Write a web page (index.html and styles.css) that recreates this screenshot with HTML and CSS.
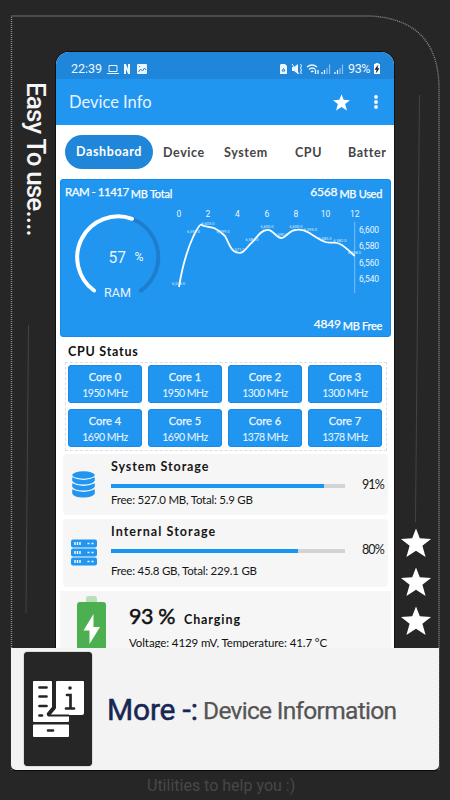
FILE: index.html
```html
<!DOCTYPE html>
<html lang="en">
<head>
<meta charset="utf-8">
<title>Device Info</title>
<link rel="stylesheet" href="styles.css">
</head>
<body>
<svg class="defs" width="0" height="0">
  <symbol id="star" viewBox="0 0 30 30"><path d="M15 .5 18.8 10.3 30 10.9 21.4 17.8 24.6 29 15 22.8 5.4 29 8.6 17.8 0 10.9 11.2 10.3Z"/></symbol>
</svg>
<main class="poster">
  <svg class="outline" viewBox="0 0 450 800">
    <path class="dots" d="M11.5 770V16H371Q439 20 439 89V770"/>
    <path class="hair" d="M28.500 325 26 613M419.500 95 415.500 522"/>
  </svg>
  <section class="stage">
    <aside class="side left"><span class="slogan">Easy To use....</span></aside>
    <div class="phone">
      <header class="status">
        <span class="time">22:39</span>
        <svg class="notes" width="44" height="12" viewBox="0 0 44 12">
          <path d="M3 2.500h8v6H3zM1 10.500h12" fill="none" stroke="#e8f4ff"/>
          <path d="M18 1h2l2 5V1h2v10h-2l-2-5v5h-2zM32 1h8a1 1 0 0 1 1 1v8a1 1 0 0 1-1 1h-8a1 1 0 0 1-1-1V2a1 1 0 0 1 1-1z" fill="#edf6ff"/>
          <path d="m32.500 9 2-3 2 2 2-3 1.500 2M33 3.500h1" fill="none" stroke="#2086da"/>
        </svg>
        <svg class="signals" width="65" height="12" viewBox="0 0 65 12">
          <path d="M2 1h4l2 2v8H1V2z" fill="#edf6ff"/><path d="M3 8h3L4.500 5.500z" fill="none" stroke="#2086da"/>
          <path d="M13 4h2l4-3v10l-4-3h-2z" fill="#edf6ff"/><path d="m13 1 7 10M21.500 1l1 2-1 2 1 2-1 2 1 2" fill="none" stroke="#edf6ff"/>
          <path d="M28 4q5-4 10 0M30 6.500q3-3 6.500 0M32 9q1.500-1.500 2.500 0M36.500 7v4M39 11V7" fill="none" stroke="#edf6ff" stroke-width="1.300"/>
          <path d="M43 11V9M45.500 11V7M56 11V9M58.500 11V7" stroke="#fff" stroke-width="1.200"/>
          <path d="M48 11V5M50.500 11V1.500M61 11V5M63.500 11V1.500" stroke="#8fc3ee" stroke-width="1.200"/>
        </svg>
        <span class="level">93%</span>
        <svg class="cell" width="8" height="12" viewBox="0 0 8 12"><path d="M2.500 0h3v1H7v10H1V1h1.500z" fill="#fff"/><path d="M4.800 2.500 2 6.500h2L3.300 9.500 6 5.500H4.200z" fill="#123" stroke="#123" stroke-width=".6"/></svg>
      </header>
      <div class="appbar">
        <h1>Device Info</h1>
        <svg class="fav" width="17" height="17"><use href="#star"/></svg>
        <svg class="more" width="4" height="14" viewBox="0 0 4 14"><circle cx="2" cy="2" r="1.900"/><circle cx="2" cy="7" r="1.900"/><circle cx="2" cy="12" r="1.900"/></svg>
      </div>
      <nav class="tabs">
        <span class="tab active">Dashboard</span><span class="tab device">Device</span><span class="tab system">System</span><span class="tab cpu">CPU</span><span class="tab battery">Battery</span>
      </nav>
      <section class="ram">
        <div class="line"><span class="total"><b>RAM - 11417</b><i>MB Total</i></span><span class="used"><b>6568</b><i>MB Used</i></span></div>
        <svg class="chart" width="331" height="110" viewBox="60 205 331 110">
          <path class="track" d="M132.500 219A41 41 0 0 1 141 290.500"/>
          <path class="gauge" d="M94 290.500A41 41 0 0 1 132 218.800"/>
          <g class="reading"><text x="108.500" y="263" font-size="16" textLength="17.500" lengthAdjust="spacingAndGlyphs">57</text><text x="134.500" y="261" font-size="12" textLength="9" lengthAdjust="spacingAndGlyphs">%</text><text x="104" y="296.500" font-size="13" textLength="27" lengthAdjust="spacingAndGlyphs">RAM</text></g>
          <g class="ticks"><text x="179" y="216.500">0</text><text x="208" y="216.500">2</text><text x="237.500" y="216.500">4</text><text x="267" y="216.500">6</text><text x="296" y="216.500">8</text><text x="325.500" y="216.500">10</text><text x="354.700" y="216.500">12</text></g>
          <path d="M354.700 222V293" stroke="#79c1fa"/>
          <path class="curve" d="M179 287C182 268 188 248 193.500 236 197 229 199 225 201 224.500 203 227 211 226.500 215 228.500 220 231 222 233 225 236 229 243 231 252 237.500 252.500 244 255 248 245 252.500 242 257 237 261 230 267 230 273 229 276 238 281.500 238 286 238 289 230 296 230 303 228 307 232 311 234 316 237 320 240 325.500 242 331 244 335 241 340 244 346 247 350 252 354.700 256"/>
          <g class="labels"><text x="178.500" y="284.500">6,528.0</text><text x="193.500" y="233">6,592.0</text><text x="208" y="225">6,603.0</text><text x="223" y="233">6,599.0</text><text x="238" y="251">6,571.0</text><text x="252" y="240.500">6,584.0</text><text x="267" y="227.500">6,600.0</text><text x="281" y="235.500">6,590.0</text><text x="296" y="227.500">6,600.0</text><text x="310.500" y="231">6,595.0</text><text x="325" y="240">6,585.0</text><text x="340" y="242">6,582.0</text><text x="354.500" y="253.500">6,568.0</text></g>
          <g class="scale"><text x="359" y="233" textLength="20">6,600</text><text x="359" y="249.300" textLength="20">6,580</text><text x="359" y="265.500" textLength="20">6,560</text><text x="359" y="281.600" textLength="20">6,540</text></g>
        </svg>
        <div class="line end"><span class="free"><b>4849</b><i>MB Free</i></span></div>
      </section>
      <h2 class="cpu-title">CPU Status</h2>
      <section class="cores">
        <div><b>Core 0</b><span>1950 MHz</span></div><div><b>Core 1</b><span>1950 MHz</span></div><div><b>Core 2</b><span>1300 MHz</span></div><div><b>Core 3</b><span>1300 MHz</span></div>
        <div><b>Core 4</b><span>1690 MHz</span></div><div><b>Core 5</b><span>1690 MHz</span></div><div><b>Core 6</b><span>1378 MHz</span></div><div><b>Core 7</b><span>1378 MHz</span></div>
      </section>
      <section class="storage">
        <svg width="26" height="27" viewBox="0 0 26 27"><g fill="#2196f0"><ellipse cx="12.500" cy="4" rx="11.300" ry="3.700"/><path d="M1.200 6.200q11.300 5.500 22.600 0v3.500q-2 3.500-11.300 3.700T1.200 9.700zM1.200 12.200q11.300 5.500 22.600 0v3.500q-2 3.500-11.300 3.700T1.200 15.700zM1.200 18.200q11.300 5.500 22.600 0v4.300q-2 3.800-11.300 4T1.200 22.500z"/></g></svg>
        <div class="detail"><h3 class="sys">System Storage</h3><div class="bar"><i style="width:91%"></i></div><p class="p1">Free: 527.0 MB, Total: 5.9 GB</p></div>
        <span class="pct">91%</span>
      </section>
      <section class="storage internal">
        <svg width="26" height="27" viewBox="0 0 26 27"><g fill="#2196f0"><rect y="0.500" width="26" height="8" rx="2"/><rect y="9.500" width="26" height="8" rx="2"/><rect y="18.500" width="26" height="8" rx="2"/></g><path d="M4 3v3M6.500 3v3M9 3v3M4 12v3M6.500 12v3M9 12v3M4 21v3M6.500 21v3M9 21v3M16.500 4.500h2M20.500 4.500h2M16.500 13.500h2M20.500 13.500h2M16.500 22.500h2M20.500 22.500h2" stroke="#fff" stroke-width="1.400"/></svg>
        <div class="detail"><h3 class="int">Internal Storage</h3><div class="bar"><i style="width:80%"></i></div><p class="p2">Free: 45.8 GB, Total: 229.1 GB</p></div>
        <span class="pct">80%</span>
      </section>
      <section class="power">
        <svg width="29" height="54" viewBox="0 0 29 54"><path d="M9 6V3q0-3 3-3h5q3 0 3 3v3z" fill="#b9dfbb"/><path d="M3 6h23q3 0 3 3v45H0V9q0-3 3-3z" fill="#4caf50"/><path d="M16.500 18 6.500 34.500h6V48L23 31h-6.500z" fill="#fff"/></svg>
        <div class="charge"><p class="head"><b>93 %</b><strong>Charging</strong></p><p class="volts">Voltage: 4129 mV, Temperature: 41.7 °C</p></div>
      </section>
    </div>
    <aside class="side right"><svg><use href="#star"/></svg><svg><use href="#star"/></svg><svg><use href="#star"/></svg></aside>
  </section>
  <section class="banner">
    <div class="tile">
      <svg width="52" height="56" viewBox="0 0 52 56"><g fill="#fff"><path d="M2 0h17q1 0 1 1v25l-5 6q-1 3 2 3h20v5q0 1-1 1H2q-1 0-1-1V1q0-1 1-1z"/><path d="M25 0h26q1 0 1 1v31q0 2-2 2H18l6-7V1q0-1 1-1z"/><rect x="1" y="43.500" width="36" height="12.500" rx="1"/></g><path d="M7.500 6.500h7M7.500 15.500h7M7.500 25h7M7.500 34.500h2.500M16 49.500h5M35 14h3.500v13.500M34 27.500h8" fill="none" stroke="#252525" stroke-width="2.700" stroke-linecap="round"/><path d="M23 27 16.500 34.500H37" fill="none" stroke="#252525" stroke-width="2" stroke-linejoin="round"/><circle cx="38" cy="7" r="1.800" fill="#252525"/></svg>
    </div>
    <p class="tagline"><b>More -:</b><span>Device Information</span></p>
  </section>
  <footer><span>Utilities to help you :)</span></footer>
</main>
</body>
</html>
```
FILE: styles.css
```css
* { box-sizing: border-box; }
body, h1, h2, h3, p { margin: 0; }
body { width: 450px; height: 800px; overflow: hidden; background: #262626; font-family: "Lato", sans-serif; }
i { font-style: normal; }
svg { display: block; flex: none; }
.defs { position: absolute; }
.poster { position: relative; height: 800px; padding-top: 52px; }
.outline { position: absolute; top: 0; left: 0; width: 450px; height: 800px; }
.dots { fill: none; stroke: #8b8b8b; stroke-width: 1.4; stroke-dasharray: 1 1; }
.hair { fill: none; stroke: #444; }
.stage { display: grid; grid-template-columns: 56px 338px 56px; height: 596px; }
.slogan { display: block; writing-mode: vertical-rl; margin: 30px 0 0 21px; color: #f5f5f5; font: 500 26px/30px Roboto, sans-serif; white-space: nowrap; letter-spacing: -.85px; }
.phone { position: relative; overflow: hidden; border-radius: 13px 13px 0 0; background: #fff; box-shadow: 0 0 0 1px #111; }
.status { display: flex; align-items: center; height: 27px; padding: 6px 13px 0 15px; background: #2086da; color: #edf6ff; font: 12.5px/16px Roboto, sans-serif; }
.time { width: 35px; }
.signals { margin-left: auto; }
.level { width: 24px; margin-left: 4px; letter-spacing: -.4px; }
.cell { margin-left: 1px; }
.appbar { display: flex; align-items: center; height: 46px; padding: 0 16px 0 13px; background: #2196f0; color: #fff; }
.appbar svg { fill: #fff; }
.fav { margin-left: auto; }
.fav use { width: 17px; height: 17px; }
.more { margin-left: 24px; }
h1 { font-size: 16.5px; font-weight: 400; line-height: 22px; white-space: nowrap; color: #e7f3ff; }
.tabs { display: flex; align-items: center; height: 54px; padding-left: 9px; width: 330px; overflow: hidden; color: #454545; font-size: 12.5px; font-weight: 700; letter-spacing: .6px; white-space: nowrap; }
.tab { flex: none; }
.active { width: 88px; height: 34px; border-radius: 17px; background: #2086da; color: #fff; line-height: 34px; text-align: center; }
.device { width: 61px; margin-left: 10px; }
.system { width: 71px; }
.cpu { width: 53px; }
.ram { width: 331px; height: 158px; margin-left: 4px; border-radius: 4px; background: #2196f0; box-shadow: inset 0 0 0 1px #198ae8; color: #fff; }
.line { display: flex; justify-content: space-between; height: 26px; padding: 4px 9px 0 5px; font-size: 11px; line-height: 17px; white-space: nowrap; -webkit-text-stroke: .25px #fff; }
.line b { font-size: 11.5px; font-weight: 400; letter-spacing: -.2px; }
.total b { letter-spacing: -.5px; }
.line i { position: relative; top: 2px; margin-left: 2px; letter-spacing: -.2px; }
.used b, .free b { font-size: 12px; }
.used i, .free i { letter-spacing: -.3px; }
.end { justify-content: flex-end; padding-top: 0; }
.reading { fill: #e8f4ff; font-family: Roboto, sans-serif; }
.gauge, .track { fill: none; stroke: #fff; stroke-width: 4; stroke-linecap: round; }
.track { stroke: #1e7ecd; }
.curve { fill: none; stroke: #fff; stroke-width: 1.8; }
.ticks { fill: #eaf5ff; font: 8.5px Roboto, sans-serif; text-anchor: middle; }
.labels { fill: #d8edff; font: 4px Roboto, sans-serif; text-anchor: middle; }
.scale { fill: #eaf5ff; font: 8.5px Roboto, sans-serif; }
.cpu-title { height: 25px; padding: 6px 0 0 12px; color: #111; font-size: 12.5px; line-height: 18px; letter-spacing: .75px; }
.cores { display: grid; grid-template-columns: repeat(4, 74px); grid-auto-rows: 38px; gap: 6px; width: 322px; height: 89px; margin-left: 9px; padding: 2px; border: 1px dashed #dcdcef; }
.cores div { display: flex; flex-direction: column; border-radius: 4px; background: #2196f0; box-shadow: inset 0 0 0 1px #198ae8; color: #eef7ff; text-align: center; font-size: 10.5px; letter-spacing: -.5px; line-height: 16px; padding-top: 4px; }
.cores b { font-size: 11px; font-weight: 400; letter-spacing: 0; -webkit-text-stroke: .25px #eef7ff; }
.storage { display: flex; width: 325px; height: 61px; margin: 3px 0 0 7px; padding: 4px 4px 0 8px; border-radius: 4px; background: #f6f6f6; color: #171717; }
.storage > svg { margin-top: 13px; }
.detail { width: 234px; margin-left: 14px; }
h3 { font-size: 12.5px; line-height: 17px; letter-spacing: .9px; white-space: nowrap; }
h3.int { letter-spacing: 1.05px; }
.bar { height: 4px; margin-top: 9px; background: #d3d3d3; }
.bar i { display: block; height: 4px; background: #1995f3; }
.detail p { margin-top: 4px; font-size: 11.5px; line-height: 16px; letter-spacing: -.24px; white-space: nowrap; }
.pct { margin: 19px 0 0 auto; font-size: 12.5px; line-height: 16px; letter-spacing: -.8px; }
.internal { height: 68px; margin-top: 4px; }
.internal > svg { margin-top: 16px; }
.internal .detail p { margin-top: 10px; }
.power { display: flex; width: 331px; height: 57px; margin: 4px 0 0 4px; padding-top: 5px; padding-left: 17px; background: #f6f6f6; color: #111; }
.charge { margin-left: 23px; white-space: nowrap; }
.head { display: flex; align-items: baseline; line-height: 30px; margin-top: 5px; }
.head b { width: 55px; font-size: 21.5px; font-weight: 400; letter-spacing: -.4px; -webkit-text-stroke: .5px #111; }
.head strong { font-size: 12.5px; letter-spacing: .9px; }
.volts { margin-top: 0; font-size: 11.5px; line-height: 16px; letter-spacing: -.1px; }
.right { display: flex; flex-direction: column; gap: 9px; padding: 476px 0 0 7px; }
.right svg { width: 30px; height: 30px; fill: #fff; }
.banner { position: relative; display: flex; align-items: center; width: 428px; height: 122px; margin-left: 11px; border-radius: 0 0 5px 5px; background: #f3f3f3; box-shadow: 0 1px 1px #080b0b; }
.tile { display: grid; place-items: center; width: 68px; height: 114px; margin-left: 13px; border-radius: 4px; background: #262626; box-shadow: 0 0 1px #111; }
.tagline { display: flex; align-items: baseline; margin-left: 15px; font-family: Roboto, sans-serif; white-space: nowrap; }
.tagline b { width: 96px; color: #172653; font-size: 30px; font-weight: 400; letter-spacing: -.2px; -webkit-text-stroke: .5px #172653; }
.tagline span { position: relative; top: -1px; color: #555; font-size: 24.5px; letter-spacing: -.7px; -webkit-text-stroke: .25px #555; }
footer { color: #484848; font: 16px/32px Roboto, sans-serif; padding-left: 147px; white-space: nowrap; }
```
